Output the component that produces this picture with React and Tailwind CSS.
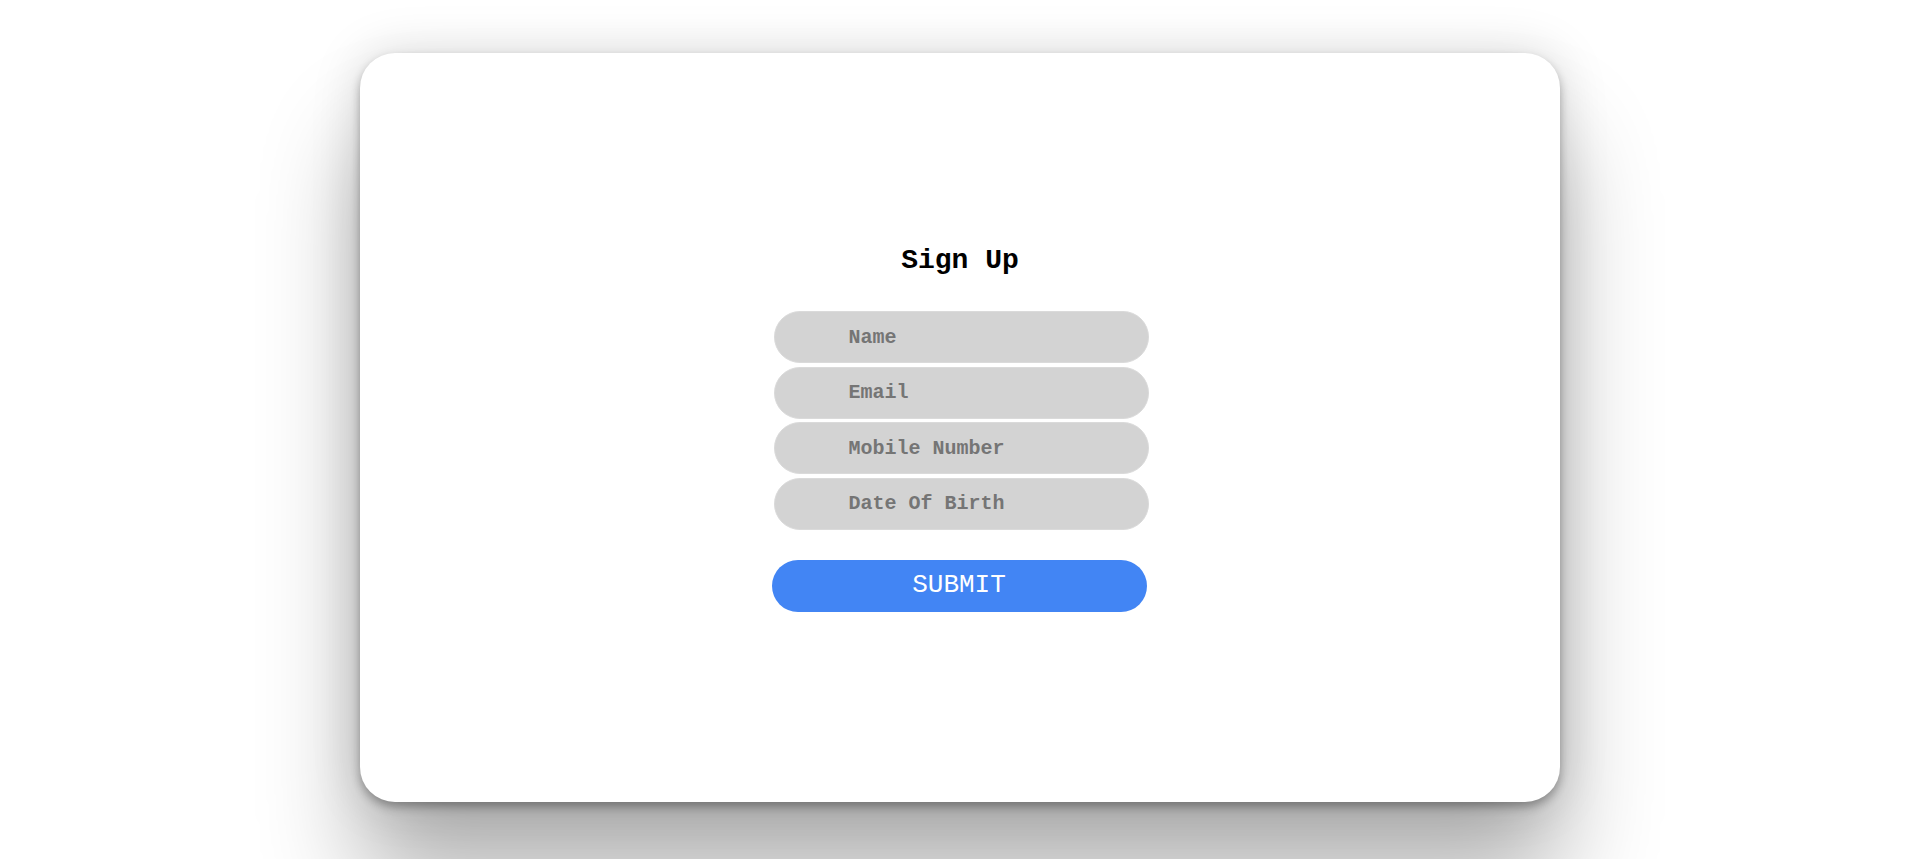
import React, { useState } from 'react';

function App() {
  const [form, setForm] = useState({ name: '', email: '', mobile: '', dob: '' });

  const fields = [
    { key: 'name', placeholder: 'Name' },
    { key: 'email', placeholder: 'Email' },
    { key: 'mobile', placeholder: 'Mobile Number' },
    { key: 'dob', placeholder: 'Date Of Birth' },
  ];

  const handleSubmit = (e) => {
    e.preventDefault();
  };

  return (
    <div className="h-screen w-full bg-white flex items-center justify-center pb-[4px] font-['Liberation_Mono','Courier_New',monospace]">
      <div className="w-[1200px] h-[749px] bg-white rounded-[35px] shadow-[0_5px_10px_rgba(0,0,0,0.3),0_0_50px_rgba(0,0,0,0.15),0_80px_100px_rgba(0,0,0,0.3)] flex items-center justify-center">
        <form onSubmit={handleSubmit} className="w-[377px] flex flex-col items-start">
          <h2 className="w-full pt-[2px] text-center text-[28px] leading-[32px] font-bold text-black mb-[34px]">
            Sign Up
          </h2>

          <div className="flex flex-col gap-[3.5px]">
            {fields.map((f) => (
              <input
                key={f.key}
                type="text"
                value={form[f.key]}
                onChange={(e) => setForm({ ...form, [f.key]: e.target.value })}
                placeholder={f.placeholder}
                className="ml-[2px] w-[375px] h-[52px] rounded-full bg-[#d3d3d3] border border-[#dadada] pl-[74px] text-[20px] font-bold text-[#333] placeholder:text-[#757575] outline-none"
              />
            ))}
          </div>

          {/* Submit */}
          <button
            type="submit"
            className="mt-[30px] w-[375px] h-[52px] rounded-full bg-[#4285f4] text-white text-[26px] font-normal"
          >
            SUBMIT
          </button>
        </form>
      </div>
    </div>
  );
}

export default App;
